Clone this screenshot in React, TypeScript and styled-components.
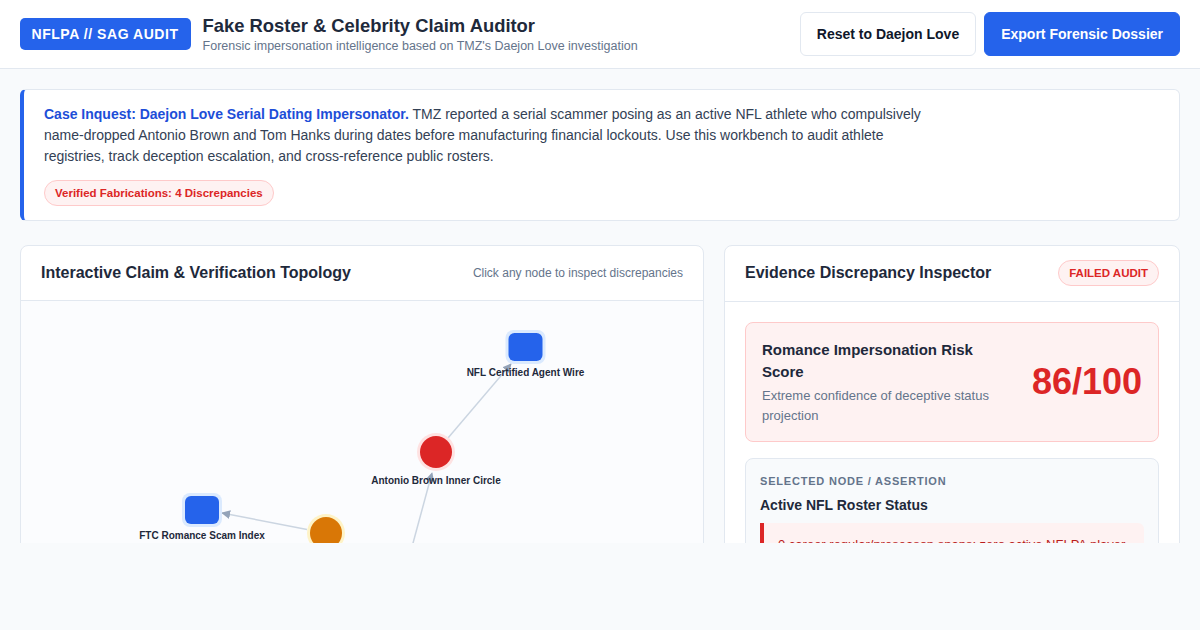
import React from "react";
import styled, { createGlobalStyle } from "styled-components";

const GlobalStyle = createGlobalStyle`
  * { box-sizing: border-box; }
  body {
    margin: 0;
    background: #f8fafc;
    font-family: "Liberation Sans", Arial, sans-serif;
    color: #1e293b;
  }
`;

const Shell = styled.div`
  height: 543px;
  overflow: hidden;
`;

const Header = styled.header`
  height: 69px;
  padding: 0 20px;
  display: flex;
  align-items: center;
  justify-content: space-between;
  background: #ffffff;
  border-bottom: 1px solid #e2e8f0;
`;

const Brand = styled.div`
  display: flex;
  align-items: center;
  gap: 12px;
`;

const Badge = styled.div`
  height: 32px;
  padding: 0 12px 0 11.5px;
  display: flex;
  align-items: center;
  background: #2563eb;
  color: #ffffff;
  border-radius: 5px;
  font-size: 14px;
  font-weight: 700;
  letter-spacing: 0.55px;
`;

const TitleBlock = styled.div`
  display: flex;
  flex-direction: column;
  gap: 1px;
`;

const Title = styled.h1`
  margin: 0;
  font-size: 18.4px;
  line-height: 22px;
  font-weight: 700;
  color: #1e293b;
`;

const Subtitle = styled.div`
  font-size: 12.5px;
  line-height: 16px;
  color: #64748b;
`;

const Actions = styled.div`
  display: flex;
  gap: 8px;
`;

const Button = styled.button<{ $primary?: boolean }>`
  height: 44px;
  padding: 0 16px;
  border-radius: 6px;
  border: 1px solid ${(p) => (p.$primary ? "#2563eb" : "#e2e8f0")};
  background: ${(p) => (p.$primary ? "#2563eb" : "#ffffff")};
  color: ${(p) => (p.$primary ? "#ffffff" : "#0f172a")};
  font-family: inherit;
  font-size: 14px;
  font-weight: 700;
  cursor: pointer;
`;

const Main = styled.main`
  padding: 20px;
`;

const CaseCard = styled.section`
  background: #ffffff;
  border: 1px solid #e2e8f0;
  border-left: 4px solid #2563eb;
  border-radius: 6px;
  padding: 14px 20px;
  margin-bottom: 24px;
`;

const CaseText = styled.p`
  margin: 0 0 13px;
  max-width: 880px;
  font-size: 14px;
  line-height: 21px;
  color: #334155;
`;

const CaseLead = styled.strong`
  color: #1d4ed8;
`;

const Pill = styled.span`
  display: inline-block;
  padding: 5px 10px;
  border-radius: 999px;
  background: #fef2f2;
  border: 1px solid #fecaca;
  color: #dc2626;
  font-size: 11.5px;
  line-height: 14px;
  font-weight: 700;
`;

const Grid = styled.div`
  display: grid;
  grid-template-columns: 3fr 2fr;
  gap: 20px;
  align-items: start;
`;

const Panel = styled.section`
  background: #ffffff;
  border: 1px solid #e2e8f0;
  border-radius: 8px;
  overflow: hidden;
`;

const PanelHeader = styled.div<{ $tall?: boolean }>`
  display: flex;
  align-items: center;
  justify-content: space-between;
  padding: ${(p) => (p.$tall ? "14px 20px 15px" : "17px 20px")};
  border-bottom: 1px solid #e2e8f0;
`;

const PanelTitle = styled.h2`
  margin: 0;
  font-size: 16px;
  line-height: 20px;
  font-weight: 700;
  color: #1e293b;
`;

const Hint = styled.span`
  font-size: 12px;
  color: #64748b;
`;

const GraphCanvas = styled.div`
  height: 420px;
  background: #fbfcfe;
`;

const InspectorBody = styled.div`
  padding: 20px;
  display: flex;
  flex-direction: column;
  gap: 16px;
`;

const RiskCard = styled.div`
  display: flex;
  align-items: center;
  justify-content: space-between;
  gap: 16px;
  padding: 16px;
  background: #fef2f2;
  border: 1px solid #fecaca;
  border-radius: 8px;
`;

const RiskText = styled.div`
  flex: 1;
`;

const RiskTitle = styled.div`
  font-size: 15px;
  line-height: 22px;
  font-weight: 700;
  color: #1e293b;
`;

const RiskSub = styled.div`
  margin-top: 3px;
  font-size: 13px;
  line-height: 19.5px;
  color: #64748b;
`;

const RiskScore = styled.div`
  font-size: 36px;
  font-weight: 700;
  color: #dc2626;
  line-height: 1;
`;

const SelectedCard = styled.div`
  padding: 14px;
  background: #f8fafc;
  border: 1px solid #e2e8f0;
  border-radius: 8px;
`;

const SelectedLabel = styled.div`
  font-size: 11px;
  line-height: 16px;
  font-weight: 700;
  letter-spacing: 0.8px;
  text-transform: uppercase;
  color: #64748b;
`;

const SelectedTitle = styled.div`
  margin: 6px 0 8px;
  font-size: 14px;
  line-height: 20px;
  font-weight: 700;
  color: #1e293b;
`;

const Finding = styled.div`
  padding: 12px 14px;
  background: #fef2f2;
  border-left: 4px solid #dc2626;
  border-radius: 0 6px 6px 0;
  font-size: 13px;
  line-height: 19px;
  color: #b91c1c;
`;

type GraphNode = {
  id: string;
  label: string;
  x: number;
  y: number;
  shape: "rect" | "circle";
  fill: string;
  halo: string;
};

const nodes: GraphNode[] = [
  { id: "agent", label: "NFL Certified Agent Wire", x: 504.5, y: 46, shape: "rect", fill: "#2563eb", halo: "#dbeafe" },
  { id: "ab", label: "Antonio Brown Inner Circle", x: 415, y: 151, shape: "circle", fill: "#dc2626", halo: "#fee2e2" },
  { id: "ftc", label: "FTC Romance Scam Index", x: 181, y: 209, shape: "rect", fill: "#2563eb", halo: "#dbeafe" },
  { id: "persona", label: "Daejon Love Persona", x: 305, y: 232, shape: "circle", fill: "#d97706", halo: "#fef3c7" },
  { id: "roster", label: "Active NFL Roster Status", x: 373, y: 345, shape: "circle", fill: "#dc2626", halo: "#fee2e2" },
];

const edges = [
  { from: [427, 137], to: [490, 63] },
  { from: [369, 327], to: [411, 172] },
  { from: [286, 228.5], to: [201, 212] },
];

function Topology() {
  return (
    <svg width="100%" height="420" viewBox="0 0 682 420">
      <defs>
        <marker
          id="arrow"
          viewBox="0 0 10 10"
          refX="9"
          refY="5"
          markerWidth="9"
          markerHeight="9"
          markerUnits="userSpaceOnUse"
          orient="auto"
        >
          <path d="M0,0 L10,5 L0,10 z" fill="#94a3b8" />
        </marker>
      </defs>
      {edges.map((e, i) => (
        <line
          key={i}
          x1={e.from[0]}
          y1={e.from[1]}
          x2={e.to[0]}
          y2={e.to[1]}
          stroke="#cbd5e1"
          strokeWidth={1.5}
          markerEnd="url(#arrow)"
        />
      ))}
      {nodes.map((n) => (
        <g key={n.id}>
          {n.shape === "rect" ? (
            <>
              <rect x={n.x - 20} y={n.y - 17} width={40} height={34} rx={8} fill={n.halo} />
              <rect x={n.x - 17} y={n.y - 14} width={34} height={28} rx={6} fill={n.fill} />
            </>
          ) : (
            <>
              <circle cx={n.x} cy={n.y} r={19} fill={n.halo} />
              <circle cx={n.x} cy={n.y} r={16} fill={n.fill} />
            </>
          )}
          <text
            x={n.x}
            y={n.y + (n.shape === "rect" ? 28.5 : 31.5)}
            textAnchor="middle"
            fontFamily='"Liberation Sans", Arial, sans-serif'
            fontSize={10}
            fontWeight={700}
            fill="#1e293b"
          >
            {n.label}
          </text>
        </g>
      ))}
    </svg>
  );
}

export default function App() {
  return (
    <>
      <GlobalStyle />
      <Shell>
        <Header>
          <Brand>
            <Badge>NFLPA // SAG AUDIT</Badge>
            <TitleBlock>
              <Title>Fake Roster &amp; Celebrity Claim Auditor</Title>
              <Subtitle>Forensic impersonation intelligence based on TMZ's Daejon Love investigation</Subtitle>
            </TitleBlock>
          </Brand>
          <Actions>
            <Button>Reset to Daejon Love</Button>
            <Button $primary>Export Forensic Dossier</Button>
          </Actions>
        </Header>
        <Main>
          <CaseCard>
            <CaseText>
              <CaseLead>Case Inquest: Daejon Love Serial Dating Impersonator.</CaseLead> TMZ reported a serial
              scammer posing as an active NFL athlete who compulsively name-dropped Antonio Brown and Tom Hanks
              during dates before manufacturing financial lockouts. Use this workbench to audit athlete
              registries, track deception escalation, and cross-reference public rosters.
            </CaseText>
            <Pill>Verified Fabrications: 4 Discrepancies</Pill>
          </CaseCard>
          <Grid>
            <Panel>
              <PanelHeader>
                <PanelTitle>Interactive Claim &amp; Verification Topology</PanelTitle>
                <Hint>Click any node to inspect discrepancies</Hint>
              </PanelHeader>
              <GraphCanvas>
                <Topology />
              </GraphCanvas>
            </Panel>
            <Panel>
              <PanelHeader $tall>
                <PanelTitle>Evidence Discrepancy Inspector</PanelTitle>
                <Pill>FAILED AUDIT</Pill>
              </PanelHeader>
              <InspectorBody>
                <RiskCard>
                  <RiskText>
                    <RiskTitle>Romance Impersonation Risk Score</RiskTitle>
                    <RiskSub>Extreme confidence of deceptive status projection</RiskSub>
                  </RiskText>
                  <RiskScore>86/100</RiskScore>
                </RiskCard>
                <SelectedCard>
                  <SelectedLabel>Selected Node / Assertion</SelectedLabel>
                  <SelectedTitle>Active NFL Roster Status</SelectedTitle>
                  <Finding>
                    0 career regular/preseason snaps; zero active NFLPA player registry matches across all 32
                    franchise rosters.
                  </Finding>
                </SelectedCard>
              </InspectorBody>
            </Panel>
          </Grid>
        </Main>
      </Shell>
    </>
  );
}
